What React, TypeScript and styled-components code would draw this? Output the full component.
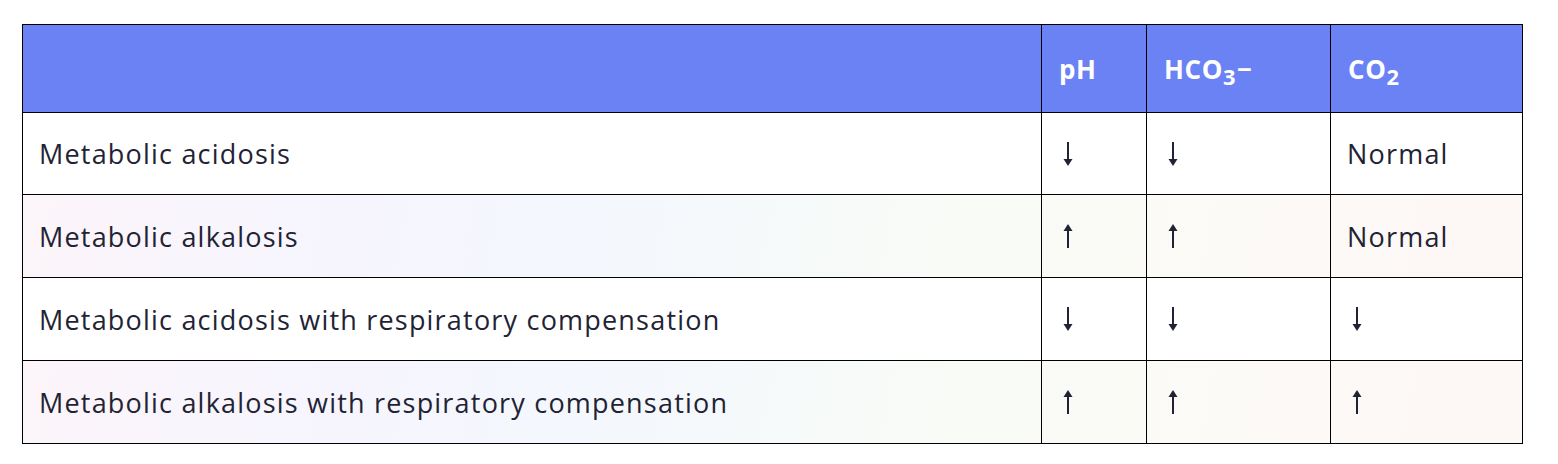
import React from "react";
import styled, { createGlobalStyle } from "styled-components";

const GlobalStyle = createGlobalStyle`
  html, body {
    margin: 0;
    padding: 0;
    background: #ffffff;
  }
  body {
    font-family: "Open Sans", "Liberation Sans", sans-serif;
  }
`;

const Page = styled.div`
  padding: 24px 0 0 22px;
`;

const Table = styled.div`
  display: grid;
  width: 1501px;
  border-left: 1px solid #000;
  border-top: 1px solid #000;
  box-sizing: border-box;
`;

const Row = styled.div<{ $variant: "head" | "plain" | "tint" }>`
  display: grid;
  grid-template-columns: 1019px 105px 184px 192px;
  height: ${(p) => (p.$variant === "head" ? "88px" : "83px")};
  background: ${(p) =>
    p.$variant === "head"
      ? "#6b82f5"
      : p.$variant === "tint"
      ? "linear-gradient(100deg, #fcf5fa 0%, #f6f5fe 22%, #f4f8fd 40%, #f8fbf6 62%, #fcfaf6 80%, #fdf7f6 100%)"
      : "#ffffff"};

  &:nth-child(2) {
    height: 82px;
  }
`;

const Cell = styled.div<{ $head?: boolean }>`
  display: flex;
  align-items: center;
  box-sizing: border-box;
  padding: 0 16px;
  padding-left: ${(p) => (p.$head ? "17px" : "16px")};
  border-right: 1px solid #000;
  border-bottom: 1px solid #000;
  font-size: ${(p) => (p.$head ? "26px" : "27px")};
  letter-spacing: ${(p) => (p.$head ? "0.6px" : "1.2px")};
  font-weight: ${(p) => (p.$head ? 700 : 400)};
  color: ${(p) => (p.$head ? "#ffffff" : "#1f2334")};
  white-space: nowrap;
`;

const Sub = styled.span`
  display: inline-block;
  font-size: 0.84em;
  position: relative;
  top: 0.32em;
  margin: 0 1px 0 0;
`;

const ArrowSvg = styled.svg`
  display: block;
  width: 20px;
  height: 24px;
  fill: #1f2334;
`;

function Arrow({ dir }: { dir: "up" | "down" }) {
  return (
    <ArrowSvg viewBox="0 0 20 24" aria-label={dir === "up" ? "↑" : "↓"}>
      <g transform={dir === "down" ? "rotate(180 10 12)" : undefined}>
        <polygon points="10,0 14.5,7 5.5,7" />
        <rect x="9" y="6" width="2" height="18" />
      </g>
    </ArrowSvg>
  );
}

type Val = "up" | "down" | "Normal";
type Data = { label: string; ph: Val; hco3: Val; co2: Val };

const rows: Data[] = [
  { label: "Metabolic acidosis", ph: "down", hco3: "down", co2: "Normal" },
  { label: "Metabolic alkalosis", ph: "up", hco3: "up", co2: "Normal" },
  { label: "Metabolic acidosis with respiratory compensation", ph: "down", hco3: "down", co2: "down" },
  { label: "Metabolic alkalosis with respiratory compensation", ph: "up", hco3: "up", co2: "up" },
];

function Value({ v }: { v: Val }) {
  if (v === "Normal") return <>Normal</>;
  return <Arrow dir={v} />;
}

export default function App() {
  return (
    <>
      <GlobalStyle />
      <Page>
        <Table>
          <Row $variant="head">
            <Cell $head />
            <Cell $head>pH</Cell>
            <Cell $head>
              <span>
                HCO<Sub>3</Sub>−
              </span>
            </Cell>
            <Cell $head>
              <span>
                CO<Sub>2</Sub>
              </span>
            </Cell>
          </Row>
          {rows.map((r, i) => (
            <Row key={r.label} $variant={i % 2 === 1 ? "tint" : "plain"}>
              <Cell>{r.label}</Cell>
              <Cell>
                <Value v={r.ph} />
              </Cell>
              <Cell>
                <Value v={r.hco3} />
              </Cell>
              <Cell>
                <Value v={r.co2} />
              </Cell>
            </Row>
          ))}
        </Table>
      </Page>
    </>
  );
}
